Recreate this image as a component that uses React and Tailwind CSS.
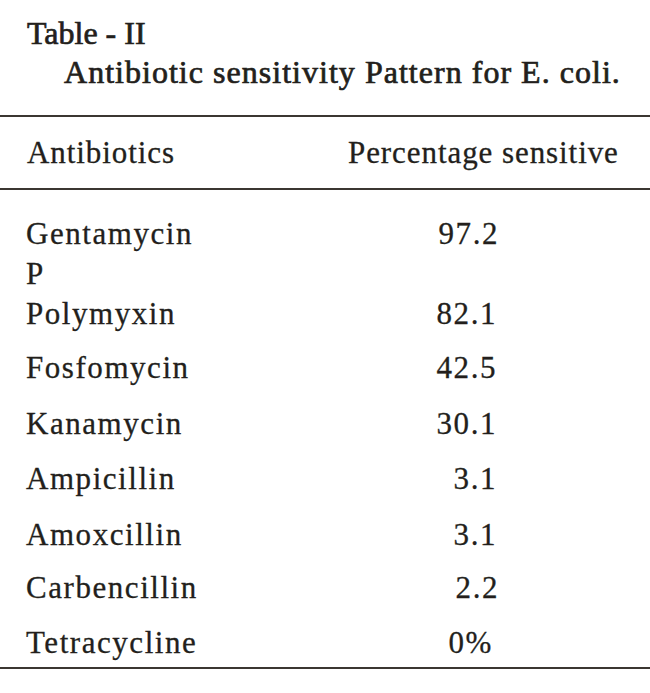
const ROWS = [
  { name: 'Gentamycin', value: '97.2', gap: 'mt-[24px]', pad: '' },
  { name: 'P', value: '', gap: 'mt-0', pad: '' },
  { name: 'Polymyxin', value: '82.1', gap: 'mt-0', pad: 'pr-[2px]' },
  { name: 'Fosfomycin', value: '42.5', gap: 'mt-[14px]', pad: 'pr-[2px]' },
  { name: 'Kanamycin', value: '30.1', gap: 'mt-[16px]', pad: 'pr-[2px]' },
  { name: 'Ampicillin', value: '3.1', gap: 'mt-[15px]', pad: 'pr-[2px]' },
  { name: 'Amoxcillin', value: '3.1', gap: 'mt-[16px]', pad: 'pr-[2px]' },
  { name: 'Carbencillin', value: '2.2', gap: 'mt-[13px]', pad: '' },
  { name: 'Tetracycline', value: '0%', gap: 'mt-[15px]', pad: 'pr-[6px]' },
]

export default function App() {
  return (
    <div
      className="w-[650px] h-[693px] bg-white text-[#231f1c] overflow-hidden [-webkit-text-stroke:0.3px_#231f1c]"
      style={{ fontFamily: '"Liberation Serif", "Times New Roman", serif' }}
    >
      {/* Caption */}
      <div className="pt-[14px] [-webkit-text-stroke:0.7px_#231f1c]">
        <p className="pl-[27px] text-[32px] leading-[38px]">Table - II</p>
        <p className="pl-[64px] text-[32px] leading-[40px] tracking-[0.032em]">
          Antibiotic sensitivity Pattern for E. coli.
        </p>
      </div>

      {/* Header */}
      <div className="mt-[23px] border-t-2 border-[#3b3631]">
        <div className="flex pl-[27px] pt-[16px] pb-[15px] text-[31px] leading-[40px] tracking-[0.03em]">
          <span className="w-[321px]">Antibiotics</span>
          <span>Percentage sensitive</span>
        </div>
      </div>

      {/* Body */}
      <div className="border-t-2 border-[#3b3631]">
        <div className="pl-[26px] pb-[4px] text-[31px] leading-[40px] tracking-[0.05em]">
          {ROWS.map((row) => (
            <div key={row.name} className={`flex ${row.gap}`}>
              <span className="w-[322px]">{row.name}</span>
              <span className={`w-[151px] text-right ${row.pad}`}>{row.value}</span>
            </div>
          ))}
        </div>
        <div className="border-t-2 border-[#3b3631]" />
      </div>
    </div>
  )
}
